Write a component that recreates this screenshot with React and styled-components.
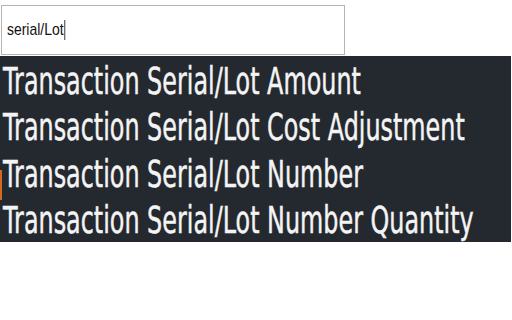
import React from 'react';
import styled, { createGlobalStyle } from 'styled-components';

const Global = createGlobalStyle`
    html, body {
        margin:0;
        padding:0;
        background:#ffffff;
    }
`;

const items = [
    'Transaction Serial/Lot Amount',
    'Transaction Serial/Lot Cost Adjustment',
    'Transaction Serial/Lot Number',
    'Transaction Serial/Lot Number Quantity',
];

function App(){
    return (
        <Page>
            <Global/>
            <Search>
                <Field>
                    <Query>serial/Lot</Query>
                    <Caret/>
                </Field>
            </Search>
            <Results>
                {items.map(item => (
                    <Item key={item}><Label>{item}</Label></Item>
                ))}
            </Results>
        </Page>
    )
}

const Page = styled.div`
    width:512px;
    height:320px;
    padding-top:5px;
    box-sizing:border-box;
`;

const Search = styled.div`
    display:flex;
    align-items:center;
    width:344px;
    height:50px;
    margin-left:1px;
    padding:0 5px;
    box-sizing:border-box;
    border:1px solid #b4b4b4;
    background:#fff;
`;

const Field = styled.div`
    display:flex;
    align-items:center;
    transform:scaleX(0.82);
    transform-origin:left center;
`;

const Query = styled.span`
    font-family:"Liberation Sans", Arial, sans-serif;
    font-size:17px;
    color:#111;
`;

const Caret = styled.span`
    display:inline-block;
    width:1.3px;
    height:20px;
    margin-left:1px;
    background:#111;
`;

const Results = styled.div`
    position:relative;
    display:flex;
    flex-direction:column;
    width:511px;
    height:186px;
    margin-top:1px;
    background:#24282f;
    overflow:hidden;

    &:before {
        content:"";
        position:absolute;
        left:0;
        top:114px;
        width:2px;
        height:30px;
        background:#d2691e;
    }
`;

const Item = styled.div`
    height:46.5px;
    display:flex;
    align-items:center;
    padding:4px 0 0 3px;
    box-sizing:border-box;
    white-space:nowrap;
`;

const Label = styled.span`
    display:inline-block;
    font-family:"DejaVu Sans", "Open Sans", sans-serif;
    font-size:37px;
    color:#f4f4f4;
    -webkit-text-stroke:0.5px #f4f4f4;
    transform:scaleX(0.645);
    transform-origin:left center;
`;

export default App;
